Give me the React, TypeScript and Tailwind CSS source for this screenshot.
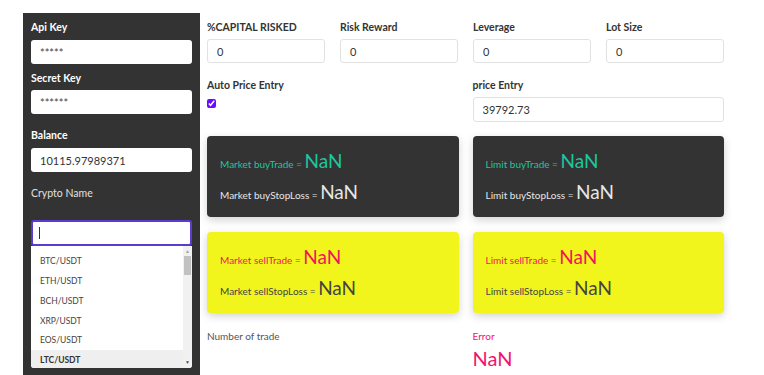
import { useState } from "react";

const pairs = ["BTC/USDT", "ETH/USDT", "BCH/USDT", "XRP/USDT", "EOS/USDT", "LTC/USDT"];

function Field({ label, value }: { label: string; value: string }) {
  return (
    <div>
      <p className="h-[16px] text-[10.5px] font-bold leading-[16px] text-[#333]">{label}</p>
      <input
        className="mt-[4px] h-[24px] w-full rounded-[3px] border border-[#e2e2e2] bg-white px-[9px] text-[11px] text-[#333] outline-none"
        defaultValue={value}
        readOnly
      />
    </div>
  );
}

function ResultCard({ kind, side }: { kind: string; side: "buy" | "sell" }) {
  const isBuy = side === "buy";
  return (
    <div
      className={
        isBuy
          ? "flex h-[81px] flex-col justify-center gap-[8px] rounded-[4px] bg-[#333333] px-[13px] pt-[3px] shadow-[0_3px_8px_rgba(0,0,0,0.18)]"
          : "flex h-[81px] flex-col justify-center gap-[8px] rounded-[4px] bg-[#f2f51c] px-[13px] pt-[3px] shadow-[0_3px_8px_rgba(0,0,0,0.18)]"
      }
    >
      <p className={isBuy ? "text-[10px] leading-[20px] text-[#1ec79c]" : "text-[10px] leading-[20px] text-[#f0145a]"}>
        {kind} {side}Trade ={" "}
        <span className="text-[19px] leading-none">NaN</span>
      </p>
      <p className={isBuy ? "text-[10px] leading-[20px] text-[#e6e6e6]" : "text-[10px] leading-[20px] text-[#444]"}>
        {kind} {side}StopLoss ={" "}
        <span className="text-[19px] leading-none">NaN</span>
      </p>
    </div>
  );
}

export default function App() {
  const [selected] = useState("LTC/USDT");

  return (
    <div className="flex h-[375px] overflow-hidden bg-white pl-[23px] pt-[13px] font-['Lato','Liberation_Sans',sans-serif]">
      <aside className="w-[177px] shrink-0 bg-[#333333] px-[8px] pt-[6px]">
        <p className="h-[16px] text-[10.5px] font-bold leading-[16px] text-white">Api Key</p>
        <input
          className="mt-[5px] h-[24px] w-full rounded-[3px] bg-white px-[9px] text-[11px] text-[#444] outline-none"
          defaultValue="*****"
          readOnly
        />
        <p className="mt-[6px] h-[16px] text-[10.5px] font-bold leading-[16px] text-white">Secret Key</p>
        <input
          className="mt-[4px] h-[24px] w-full rounded-[3px] bg-white px-[9px] text-[11px] text-[#444] outline-none"
          defaultValue="******"
          readOnly
        />
        <p className="mt-[13px] h-[16px] text-[10.5px] font-bold leading-[16px] text-white">Balance</p>
        <input
          className="mt-[5px] h-[24px] w-full rounded-[3px] bg-white px-[9px] text-[11px] text-[#333] outline-none"
          defaultValue="10115.97989371"
          readOnly
        />
        <p className="mt-[13px] h-[16px] text-[10.5px] leading-[16px] text-[#e0e0e0]">Crypto Name</p>
        <div className="mt-[19px] flex h-[26px] items-center rounded-[3px] border-2 border-[#5b3ccf] bg-white px-[6px]">
          <span className="h-[12px] w-px bg-[#333]" />
        </div>
        <div className="flex h-[122px] overflow-hidden rounded-b-[3px] bg-white">
          <ul className="flex-1 pt-[6px]">
            {pairs.map((p) => (
              <li
                className={
                  p === selected
                    ? "flex h-[19.7px] items-center bg-[#efefef] px-[9px] text-[8.5px] font-bold text-[#333]"
                    : "flex h-[19.7px] items-center px-[9px] text-[8.5px] text-[#444]"
                }
                key={p}
              >
                {p}
              </li>
            ))}
          </ul>
          <div className="flex w-[9px] flex-col items-center bg-[#f1f1f1]">
            <span className="mt-[3px] text-[5px] leading-none text-[#a3a3a3]">▲</span>
            <span className="mt-[2px] h-[19px] w-[7px] bg-[#c1c1c1]" />
            <span className="mb-[3px] mt-auto text-[5px] leading-none text-[#505050]">▼</span>
          </div>
        </div>
      </aside>

      <main className="w-[524px] pl-[7px] pt-[6px]">
        <div className="grid grid-cols-4 gap-x-[15px]">
          <Field label="%CAPITAL RISKED" value="0" />
          <Field label="Risk Reward" value="0" />
          <Field label="Leverage" value="0" />
          <Field label="Lot Size" value="0" />
        </div>

        <div className="mt-[14px] grid grid-cols-2 gap-x-[14px]">
          <div>
            <p className="h-[16px] text-[10.5px] font-bold leading-[16px] text-[#333]">Auto Price Entry</p>
            <input
              checked
              className="mt-[6px] block h-[9px] w-[9px] accent-[#6a0dff]"
              readOnly
              type="checkbox"
            />
          </div>
          <div>
            <p className="h-[16px] text-[10.5px] font-bold leading-[16px] text-[#333]">price Entry</p>
            <input
              className="mt-[4px] h-[25px] w-full rounded-[3px] border border-[#e2e2e2] bg-white px-[9px] text-[11px] text-[#333] outline-none"
              defaultValue="39792.73"
              readOnly
            />
          </div>
        </div>

        <div className="mt-[14px] grid grid-cols-2 gap-x-[14px] gap-y-[15px]">
          <ResultCard kind="Market" side="buy" />
          <ResultCard kind="Limit" side="buy" />
          <ResultCard kind="Market" side="sell" />
          <ResultCard kind="Limit" side="sell" />
        </div>

        <div className="mt-[15px] grid grid-cols-2 gap-x-[14px]">
          <p className="h-[16px] text-[10px] leading-[16px] text-[#555]">Number of trade</p>
          <div>
            <p className="h-[16px] text-[10px] leading-[16px] text-[#f0146e]">Error</p>
            <p className="mt-[4px] text-[20px] leading-none text-[#f0146e]">NaN</p>
          </div>
        </div>
      </main>
    </div>
  );
}
